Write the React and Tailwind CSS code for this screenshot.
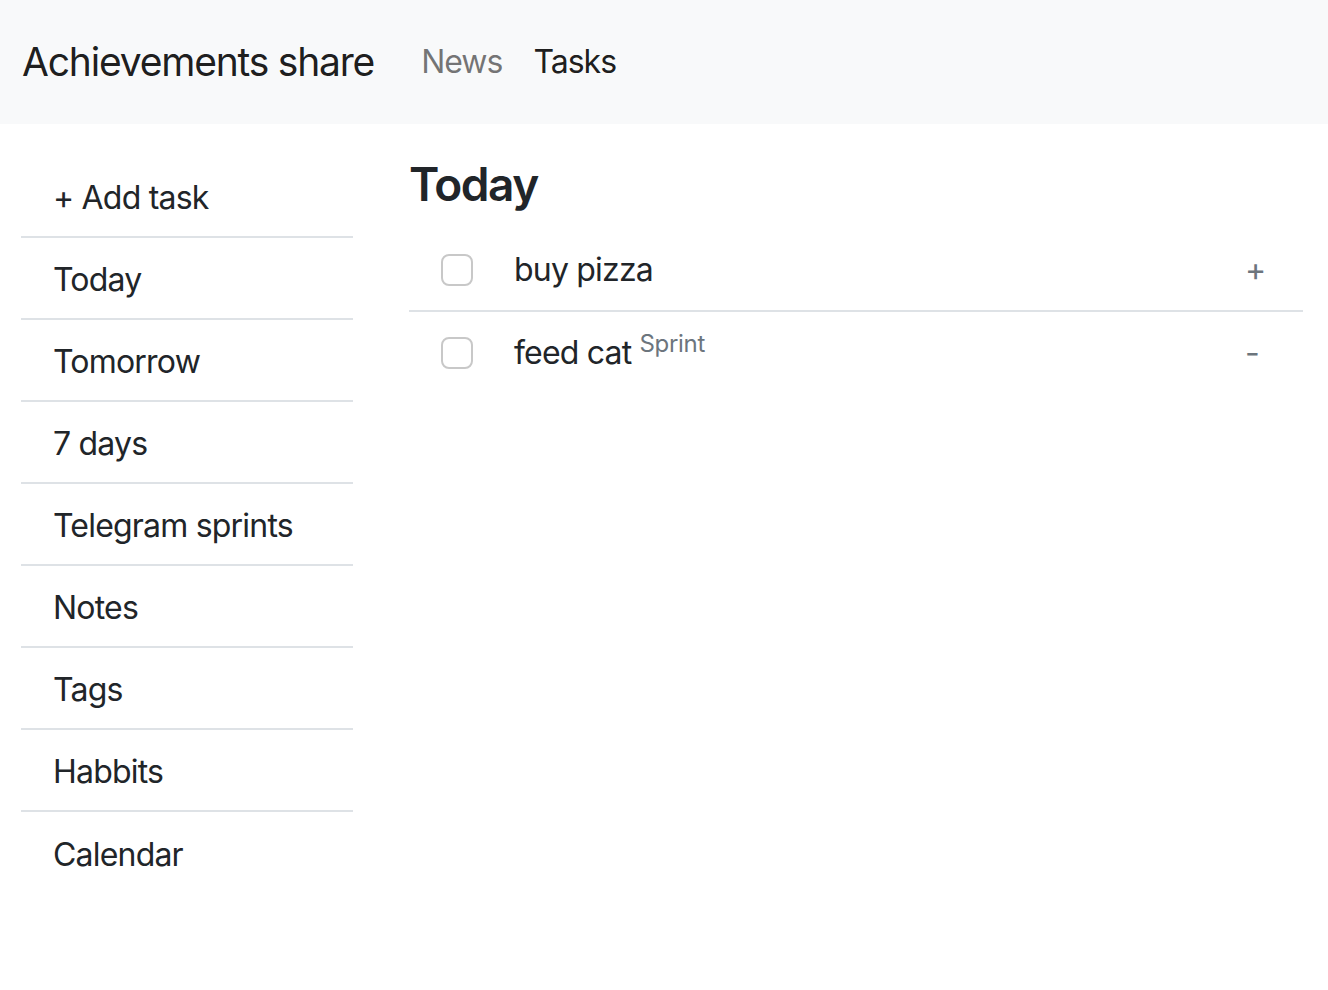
import { useState } from "react";

const menu = ["+ Add task", "Today", "Tomorrow", "7 days", "Telegram sprints", "Notes", "Tags", "Habbits", "Calendar"];

export default function App() {
  const [tasks, setTasks] = useState([
    { id: 1, title: "buy pizza", tag: null, open: false, done: false },
    { id: 2, title: "feed cat", tag: "Sprint", open: true, done: false },
  ]);

  const toggle = (id, key) =>
    setTasks((prev) => prev.map((t) => (t.id === id ? { ...t, [key]: !t[key] } : t)));

  return (
    <div className="min-h-screen bg-white text-[#212529]" style={{ fontFamily: "Inter, 'Noto Sans', sans-serif" }}>
      <nav className="h-[124px] bg-[#f8f9fa] flex items-center px-[22px]">
        <span className="text-[39px] text-black/90 tracking-[-1.2px]">Achievements share</span>
        <div className="flex items-center ml-[47px] gap-[31px] text-[32px] tracking-[-1px]">
          <a className="text-black/55">News</a>
          <a className="text-black/90">Tasks</a>
        </div>
      </nav>

      <div className="flex pt-[32px]">
        <aside className="w-[332px] ml-[21px] shrink-0">
          {menu.map((item, i) => (
            <div
              key={item}
              className={`h-[82px] px-[32px] pt-[3px] flex items-center text-[32px] tracking-[-0.8px] ${
                i < menu.length - 1 ? "border-b-2 border-[#dee2e6]" : ""
              }`}
            >
              {item}
            </div>
          ))}
        </aside>

        <main className="ml-[56px] w-[894px]">
          <h3 className="text-[46px] font-semibold leading-[1.25] mb-[16px] tracking-[-1.5px]">Today</h3>
          {tasks.map((t, i) => (
            <div
              key={t.id}
              className={`h-[82px] flex items-center pl-[32px] pr-[42px] ${
                i < tasks.length - 1 ? "border-b-2 border-[#dee2e6]" : ""
              }`}
            >
              <button
                onClick={() => toggle(t.id, "done")}
                className={`w-[32px] h-[32px] rounded-[8px] border-2 shrink-0 ${
                  t.done ? "bg-[#0d6efd] border-[#0d6efd]" : "bg-white border-[#c8c8c8]"
                }`}
              />
              <span className="ml-[41px] text-[32px] tracking-[-0.8px]">
                {t.title}
                {t.tag && (
                  <sup className="ml-[8px] text-[24px] tracking-[-0.3px] text-[#6c757d]">{t.tag}</sup>
                )}
              </span>
              <button
                onClick={() => toggle(t.id, "open")}
                className="ml-auto w-[16px] text-left text-[32px] text-[#6c757d]"
              >
                {t.open ? "-" : "+"}
              </button>
            </div>
          ))}
        </main>
      </div>
    </div>
  );
}
